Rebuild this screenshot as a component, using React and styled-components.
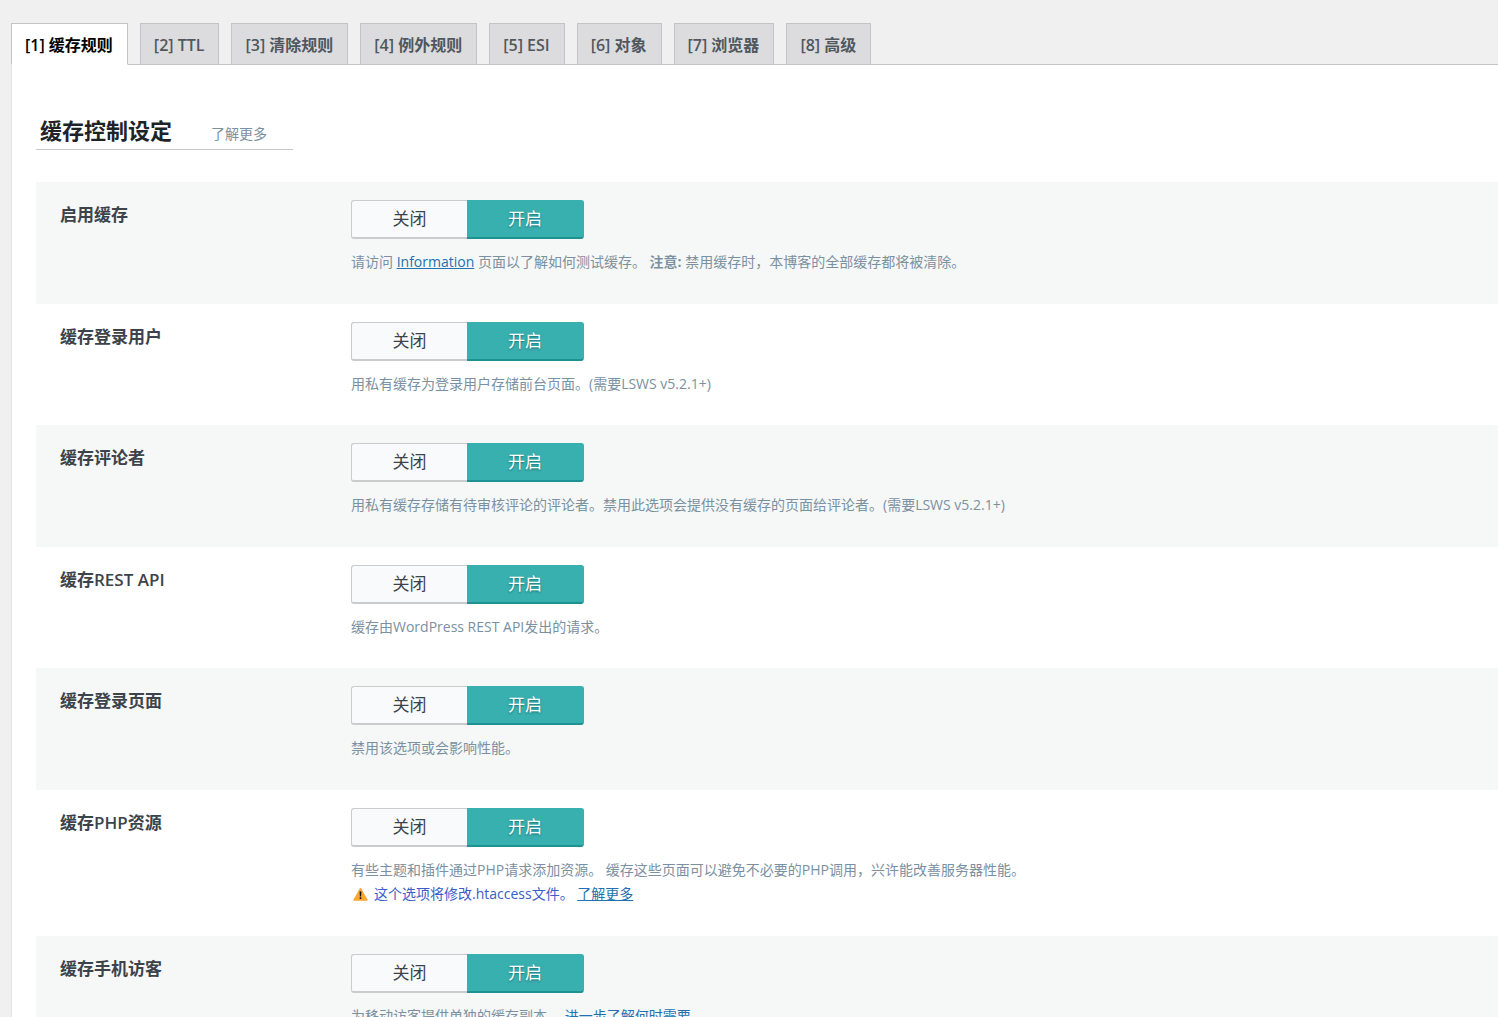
import React, { useState } from "react";
import styled, { createGlobalStyle } from "styled-components";

const GlobalStyle = createGlobalStyle`
  * {
    box-sizing: border-box;
  }

  body {
    margin: 0;
    background: #f0f0f0;
    color: #3c434a;
    font-family: "Open Sans", "Noto Sans CJK SC", sans-serif;
    font-size: 14px;
    line-height: 24px;
  }
`;

const Page = styled.div`
  display: flex;
  flex-direction: column;
  height: 100vh;
  overflow: hidden;
  padding: 23px 0 0 11px;
`;

const Tabs = styled.nav`
  display: flex;
  gap: 12px;
  border-bottom: 1px solid #c3c4c7;
`;

const Tab = styled.a`
  padding: 10px 14px 7px 13px;
  margin-bottom: ${({ $active }) => ($active ? "-1px" : "0")};
  border: 1px solid #c3c4c7;
  border-bottom: ${({ $active }) => ($active ? "1px solid #fff" : "0")};
  background: ${({ $active }) => ($active ? "#fff" : "#dcdcde")};
  color: ${({ $active }) => ($active ? "#000" : "#50575e")};
  font-size: 16px;
  font-weight: 600;
  line-height: 23px;
  text-decoration: none;
  white-space: nowrap;
`;

const Panel = styled.main`
  flex: 1 0 auto;
  padding: 48px 0 0 24px;
  border-left: 1px solid #e3e3e6;
  background: #fff;
`;

const Heading = styled.header`
  display: inline-flex;
  align-items: baseline;
  gap: 39px;
  margin-bottom: 32px;
  padding: 1px 26px 3px 4px;
  border-bottom: 1px solid #c9c9c9;
  vertical-align: top;
`;

const Title = styled.h3`
  margin: 0;
  color: #1d2327;
  font-size: 22px;
  font-weight: 600;
  line-height: 32px;
`;

const LearnMore = styled.a`
  color: #7b90a0;
  text-decoration: none;
`;

const Row = styled.section`
  display: grid;
  grid-template-columns: 291px 1fr;
  padding: 18px 24px 29px;

  &:nth-child(odd) {
    padding-bottom: 30px;
    background: #f6f8f7;
  }
`;

const Label = styled.h4`
  margin: 0;
  padding-top: 3px;
  color: #3c434a;
  font-size: 17px;
  font-weight: 600;
`;

const Switch = styled.div`
  display: inline-grid;
  grid-template-columns: 116px 117px;
  margin-bottom: 11px;
  vertical-align: top;
`;

const Radio = styled.input`
  position: absolute;
  opacity: 0;
`;

const Option = styled.label`
  height: 39px;
  border: 1px solid #c9cbcc;
  border-bottom-width: 2px;
  background: #f9fafc;
  color: #3c434a;
  font-size: 17px;
  line-height: 36px;
  text-align: center;
  cursor: pointer;

  &:first-of-type {
    border-right-width: 0;
    border-radius: 3px 0 0 3px;
  }

  &:last-of-type {
    border-left-width: 0;
    border-radius: 0 3px 3px 0;
  }

  ${Radio}:checked + & {
    border-color: #38b0b0;
    border-bottom-color: #1c9292;
    background: #38b0b0;
    color: #fff;
    text-shadow: 0 1px 2px rgba(0, 70, 70, 0.6);
  }

  ${Radio}:focus-visible + & {
    outline: 2px solid #2271b1;
  }
`;

const Desc = styled.div`
  color: #7b90a0;
`;

const Link = styled.a`
  color: #2271b1;
`;

const Warning = styled.div`
  display: flex;
  align-items: center;
  gap: 6px;
  padding: 0 0 1px 2px;
  color: #3b5cc9;
`;

const WarningIcon = () => (
  <svg width="15" height="14" viewBox="0 0 15 14" aria-hidden="true">
    <path d="M7.5 1 14.3 13.2H.7Z" fill="#fca632" stroke="#fca632" strokeWidth="1" strokeLinejoin="round" />
    <path d="M6.6 4.5h1.8l-.3 5h-1.2zM6.7 10.3h1.6V12H6.7z" fill="#111" />
  </svg>
);

const tabs = ["缓存规则", "TTL", "清除规则", "例外规则", "ESI", "对象", "浏览器", "高级"];

const settings = [
  {
    id: "cache",
    label: "启用缓存",
    desc: (
      <>
        请访问 <Link href="#information">Information</Link> 页面以了解如何测试缓存。 <strong>注意:</strong>{" "}
        禁用缓存时，本博客的全部缓存都将被清除。
      </>
    ),
  },
  {
    id: "cache-priv",
    label: "缓存登录用户",
    desc: "用私有缓存为登录用户存储前台页面。(需要LSWS v5.2.1+)",
  },
  {
    id: "cache-commenter",
    label: "缓存评论者",
    desc: "用私有缓存存储有待审核评论的评论者。禁用此选项会提供没有缓存的页面给评论者。(需要LSWS v5.2.1+)",
  },
  {
    id: "cache-rest",
    label: "缓存REST API",
    desc: "缓存由WordPress REST API发出的请求。",
  },
  {
    id: "cache-login",
    label: "缓存登录页面",
    desc: "禁用该选项或会影响性能。",
  },
  {
    id: "cache-resources",
    label: "缓存PHP资源",
    desc: (
      <>
        有些主题和插件通过PHP请求添加资源。 缓存这些页面可以避免不必要的PHP调用，兴许能改善服务器性能。
        <Warning>
          <WarningIcon />
          <span>
            这个选项将修改.htaccess文件。 <Link href="#htaccess">了解更多</Link>
          </span>
        </Warning>
      </>
    ),
  },
  {
    id: "cache-mobile",
    label: "缓存手机访客",
    desc: (
      <>
        为移动访客提供单独的缓存副本。 <Link href="#mobile">进一步了解何时需要</Link>
      </>
    ),
  },
];

const Setting = ({ id, label, desc }) => {
  const [on, setOn] = useState(true);

  return (
    <Row>
      <Label id={`${id}-label`}>{label}</Label>
      <div>
        <Switch role="radiogroup" aria-labelledby={`${id}-label`}>
          <Radio type="radio" name={id} id={`${id}-off`} checked={!on} onChange={() => setOn(false)} />
          <Option htmlFor={`${id}-off`}>关闭</Option>
          <Radio type="radio" name={id} id={`${id}-on`} checked={on} onChange={() => setOn(true)} />
          <Option htmlFor={`${id}-on`}>开启</Option>
        </Switch>
        <Desc>{desc}</Desc>
      </div>
    </Row>
  );
};

const App = () => {
  const [active, setActive] = useState(0);

  return (
    <Page lang="zh-CN">
      <GlobalStyle />
      <Tabs>
        {tabs.map((tab, i) => (
          <Tab key={tab} href={`#tab-${i + 1}`} $active={i === active} onClick={() => setActive(i)}>
            [{i + 1}] {tab}
          </Tab>
        ))}
      </Tabs>
      <Panel>
        <Heading>
          <Title>缓存控制设定</Title>
          <LearnMore href="#learn-more">了解更多</LearnMore>
        </Heading>
        <div>
          {settings.map((item) => (
            <Setting key={item.id} {...item} />
          ))}
        </div>
      </Panel>
    </Page>
  );
};

export default App;
